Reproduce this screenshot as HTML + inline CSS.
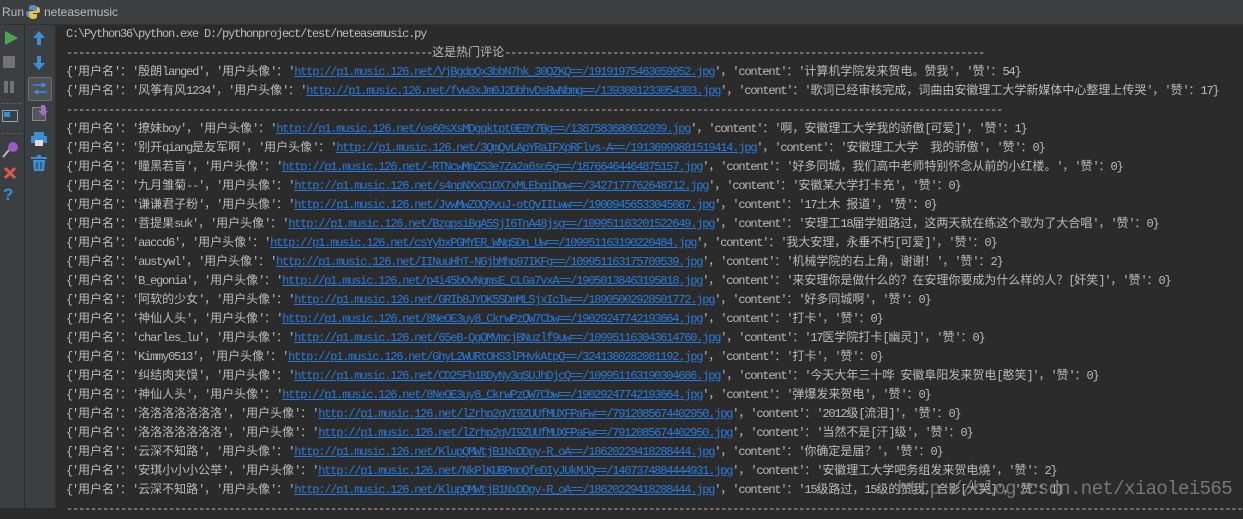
<!DOCTYPE html>
<html><head><meta charset="utf-8">
<style>
html,body{margin:0;padding:0;width:1243px;height:508px;overflow:hidden;background:#2b2b2b}
#title{position:absolute;left:0;top:0;width:1243px;height:24px;background:#3c3f41;border-bottom:1px solid #323232;font:12px "Liberation Sans",sans-serif;color:#bbbbbb}
#title span{position:absolute;top:5px}
#c1{position:absolute;left:0;top:25px;width:24px;height:483px;background:#3c3f41;border-right:1px solid #2b2b2b}
#c2{position:absolute;left:25px;top:25px;width:30px;height:483px;background:#3c3f41;border-right:1px solid #323232}
#out{position:absolute;left:66px;top:25px;margin:0;font-family:"Liberation Mono",monospace;font-size:12px;letter-spacing:-1.2px;line-height:19px;color:#bbbbbb;white-space:pre}
#out .c{font-family:"Noto Sans CJK SC",sans-serif;font-size:12px;letter-spacing:0;line-height:1;vertical-align:baseline}
#out a{color:#287bde;text-decoration:underline}
#wm{position:absolute;right:11px;top:478px;font:19px "Liberation Mono",monospace;letter-spacing:-0.6px;color:#8a8a8a;opacity:.8}
</style></head><body>
<div id="title"><span style="left:2px">Run</span>
<svg style="position:absolute;left:26px;top:5px" width="14" height="14" viewBox="0 0 14 14"><path d="M7 0C3 0 3 2 3 3v2h4v1H2C0 6 0 8 0 9s1 3 2 3h1v-2c0-1 1-2 2-2h4c1 0 2-1 2-2V3c0-2-2-3-4-3z" fill="#5a8fc6"/><path d="M7 14c4 0 4-2 4-3V9H7V8h5c2 0 2-2 2-3s-1-3-2-3h-1v2c0 1-1 2-2 2H5C4 6 3 7 3 8v3c0 2 2 3 4 3z" fill="#e6c44d"/></svg>
<span style="left:44px">neteasemusic</span></div>
<div id="c1">
<svg style="position:absolute;left:3px;top:5px" width="16" height="16"><path d="M2 1L15 8L2 15Z" fill="#49a84d"/></svg>
<div style="position:absolute;left:3px;top:31px;width:12px;height:12px;background:#737373"></div>
<div style="position:absolute;left:4px;top:56px;width:4px;height:12px;background:#737373"></div>
<div style="position:absolute;left:10px;top:56px;width:4px;height:12px;background:#737373"></div>
<div style="position:absolute;left:2px;top:78px;width:20px;border-top:1px dotted #666"></div>
<div style="position:absolute;left:2px;top:85px;width:14px;height:10px;border:1px solid #8fa5b8"></div>
<div style="position:absolute;left:4px;top:87px;width:6px;height:5px;background:#3b8fd8"></div>
<div style="position:absolute;left:2px;top:108px;width:20px;border-top:1px dotted #666"></div>
<svg style="position:absolute;left:2px;top:116px" width="18" height="18"><circle cx="11" cy="6" r="5" fill="#9b59c7"/><path d="M7 9L1 16" stroke="#bbb" stroke-width="2"/></svg>
<svg style="position:absolute;left:3px;top:141px" width="14" height="14"><path d="M2 2L12 12M12 2L2 12" stroke="#e2574c" stroke-width="3"/></svg>
<div style="position:absolute;left:3px;top:160px;font:bold 17px 'Liberation Sans';color:#3b8fd8">?</div>
</div>
<div id="c2">
<svg style="position:absolute;left:6px;top:5px" width="16" height="16"><path d="M8 1L14 8H10V15H6V8H2Z" fill="#3b8fd8"/></svg>
<svg style="position:absolute;left:6px;top:30px" width="16" height="16"><path d="M8 15L14 8H10V1H6V8H2Z" fill="#3b8fd8"/></svg>
<div style="position:absolute;left:3px;top:52px;width:22px;height:22px;background:#4e5254;border:1px solid #6a6d70;border-radius:2px"></div>
<svg style="position:absolute;left:7px;top:57px" width="16" height="14"><path d="M1 3H13M10 1L13 3L10 5M15 10H3M6 8L3 10L6 12" stroke="#3b8fd8" stroke-width="1.6" fill="none"/></svg>
<div style="position:absolute;left:7px;top:82px;width:12px;height:12px;border:1px solid #888;background:#555"></div>
<svg style="position:absolute;left:13px;top:80px" width="10" height="12"><path d="M3 0V6H0L5 11L10 6H7V0Z" fill="#a56ccf"/></svg>
<svg style="position:absolute;left:6px;top:106px" width="16" height="16"><rect x="3" y="1" width="10" height="4" fill="#3b8fd8"/><rect x="0" y="5" width="16" height="7" fill="#3b8fd8"/><rect x="4" y="9" width="8" height="6" fill="#ddd"/></svg>
<svg style="position:absolute;left:6px;top:130px" width="16" height="17"><rect x="0" y="2" width="16" height="2" fill="#3b8fd8"/><rect x="6" y="0" width="4" height="2" fill="#3b8fd8"/><path d="M2 5H14L13 16H3Z" fill="#3b8fd8"/><path d="M6 7V14M10 7V14" stroke="#3c3f41" stroke-width="1.2"/></svg>
</div>
<pre id="out">C:\Python36\python.exe D:/pythonproject/test/neteasemusic.py
-------------------------------------------------------------这是热门评论--------------------------------------------------------------------------------
{'用户名'：'殷朗langed'，'用户头像'：'<a>http://p1.music.126.net/VjBgdpQx3bbN7hk_30QZKQ==/19191975463059952.jpg</a>'，'content'：'计算机学院发来贺电。赞我'，'赞'：54}
{'用户名'：'风筝有风1234'，'用户头像'：'<a>http://p1.music.126.net/fvw3xJm0J2DbhvDsRwNbmg==/1393081233054303.jpg</a>'，'content'：'歌词已经审核完成，词曲由安徽理工大学新媒体中心整理上传哭'，'赞'：17}
------------------------------------------------------------------------------------------------------------------------------------------------------------
{'用户名'：'撩妹boy'，'用户头像'：'<a>http://p1.music.126.net/os60sXsMDgqktpt0E0Y7Bg==/1387583680032939.jpg</a>'，'content'：'啊，安徽理工大学我的骄傲[可爱]'，'赞'：1}
{'用户名'：'别开qiang是友军啊'，'用户头像'：'<a>http://p1.music.126.net/3QmQvLApYRaIFXpRFlvs-A==/19136999881519414.jpg</a>'，'content'：'安徽理工大学  我的骄傲'，'赞'：0}
{'用户名'：'瞳黑若盲'，'用户头像'：'<a>http://p1.music.126.net/-RTNcwMmZS3e7Za2a6so5g==/18766464464875157.jpg</a>'，'content'：'好多同城，我们高中老师特别怀念从前的小红楼。'，'赞'：0}
{'用户名'：'九月雏菊--'，'用户头像'：'<a>http://p1.music.126.net/s4npNXxC1OX7xMLEbgiDpw==/3427177762648712.jpg</a>'，'content'：'安徽某大学打卡充'，'赞'：0}
{'用户名'：'谦谦君子粉'，'用户头像'：'<a>http://p1.music.126.net/JvwMwZOQ9vuJ-otQvIILww==/19009456533045087.jpg</a>'，'content'：'17土木 报道'，'赞'：0}
{'用户名'：'菩提果suk'，'用户头像'：'<a>http://p1.music.126.net/BzgpsiBgA5SjI6TnA48jsg==/109951163201522649.jpg</a>'，'content'：'安理工18届学姐路过，这两天就在练这个歌为了大合唱'，'赞'：0}
{'用户名'：'aaccd6'，'用户头像'：'<a>http://p1.music.126.net/csYybxPGMYER_WNqSDn_Uw==/109951163190220484.jpg</a>'，'content'：'我大安理，永垂不朽[可爱]'，'赞'：0}
{'用户名'：'austywl'，'用户头像'：'<a>http://p1.music.126.net/IINuuHhT-NGjbMhp97IKFg==/109951163175709539.jpg</a>'，'content'：'机械学院的右上角，谢谢！'，'赞'：2}
{'用户名'：'B_egonia'，'用户头像'：'<a>http://p1.music.126.net/p4i45bOvNgmsE_CLGa7vxA==/19050138463195818.jpg</a>'，'content'：'来安理你是做什么的？在安理你要成为什么样的人？[奸笑]'，'赞'：0}
{'用户名'：'阿软的少女'，'用户头像'：'<a>http://p1.music.126.net/GRIb8JYOK5SDmMLSjxIcIw==/18905002928501772.jpg</a>'，'content'：'好多同城啊'，'赞'：0}
{'用户名'：'神仙人头'，'用户头像'：'<a>http://p1.music.126.net/8NeOE3uy8_CkrwPzQW7Cbw==/19029247742193664.jpg</a>'，'content'：'打卡'，'赞'：0}
{'用户名'：'charles_lu'，'用户头像'：'<a>http://p1.music.126.net/65eB-QgOMVmcjBNuzlf9uw==/109951163043614760.jpg</a>'，'content'：'17医学院打卡[幽灵]'，'赞'：0}
{'用户名'：'Kimmy0513'，'用户头像'：'<a>http://p1.music.126.net/GhyL2WURtOHS3lPHvkAtpQ==/3241360282081192.jpg</a>'，'content'：'打卡'，'赞'：0}
{'用户名'：'纠结肉夹馍'，'用户头像'：'<a>http://p1.music.126.net/CD25Fb1BDyNy3qSUJhDjcQ==/109951163190304686.jpg</a>'，'content'：'今天大年三十哗 安徽阜阳发来贺电[憨笑]'，'赞'：0}
{'用户名'：'神仙人头'，'用户头像'：'<a>http://p1.music.126.net/8NeOE3uy8_CkrwPzQW7Cbw==/19029247742193664.jpg</a>'，'content'：'弹爆发来贺电'，'赞'：0}
{'用户名'：'洛洛洛洛洛洛洛'，'用户头像'：'<a>http://p1.music.126.net/lZrhp2gVI9ZUUfMUXFPaFw==/7912085674402950.jpg</a>'，'content'：'2012级[流泪]'，'赞'：0}
{'用户名'：'洛洛洛洛洛洛洛'，'用户头像'：'<a>http://p1.music.126.net/lZrhp2gVI9ZUUfMUXFPaFw==/7912085674402950.jpg</a>'，'content'：'当然不是[汗]级'，'赞'：0}
{'用户名'：'云深不知路'，'用户头像'：'<a>http://p1.music.126.net/KlupQMWtjB1NxDDpy-R_oA==/18620229418288444.jpg</a>'，'content'：'你确定是届？'，'赞'：0}
{'用户名'：'安琪小小小公举'，'用户头像'：'<a>http://p1.music.126.net/NkPlKUBPmoQfeDIyJUkMJQ==/1407374884444931.jpg</a>'，'content'：'安徽理工大学吧务组发来贺电燒'，'赞'：2}
{'用户名'：'云深不知路'，'用户头像'：'<a>http://p1.music.126.net/KlupQMWtjB1NxDDpy-R_oA==/18620229418288444.jpg</a>'，'content'：'15级路过，15级的赞我，合影[大哭]'，'赞'：1}
------------------------------------------------------------------------------------------------------------------------------------------------------------------------------------------------------</pre>
<div id="wm">http://blog.csdn.net/xiaolei565</div>
<script>
(function(){
var w=document.createTreeWalker(document.getElementById('out'),NodeFilter.SHOW_TEXT,null),n,ns=[];
while(n=w.nextNode())ns.push(n);
ns.forEach(function(t){
 var s=t.nodeValue;if(!/[^\x00-\x7f]/.test(s))return;
 var f=document.createDocumentFragment(),buf='',cb='';
 function fa(){if(buf){f.appendChild(document.createTextNode(buf));buf='';}}
 function fc(){if(cb){var sp=document.createElement('span');sp.className='c';sp.textContent=cb;f.appendChild(sp);cb='';}}
 for(var i=0;i<s.length;i++){var ch=s[i];
  if(ch.charCodeAt(0)>127){fa();cb+=ch;}else{fc();buf+=ch;}}
 fa();fc();
 t.parentNode.replaceChild(f,t);
});
})();
</script>
</body></html>
